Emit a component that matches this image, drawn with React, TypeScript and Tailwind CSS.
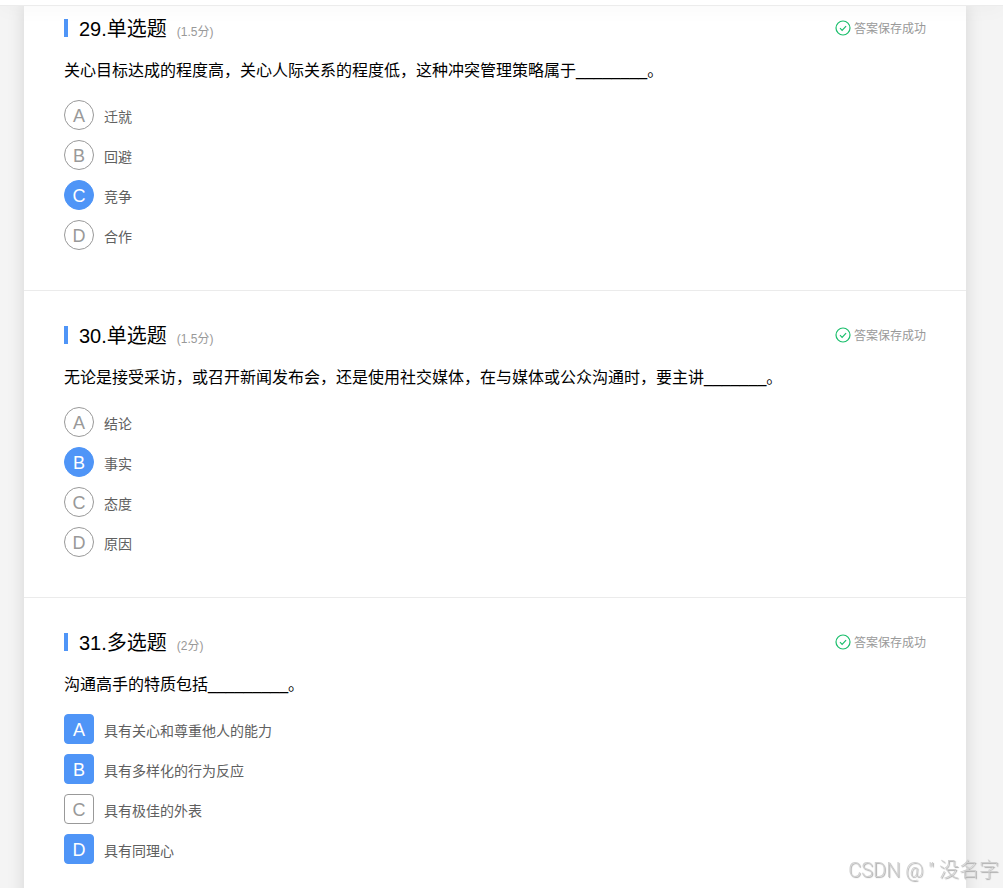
import { useState } from 'react';

type Question = {
  id: number;
  kind: 'single' | 'multiple';
  score: string;
  text: string;
  options: string[];
  answer: number[];
};

const questions: Question[] = [
  {
    id: 29,
    kind: 'single',
    score: '1.5',
    text: '关心目标达成的程度高，关心人际关系的程度低，这种冲突管理策略属于________。',
    options: ['迁就', '回避', '竞争', '合作'],
    answer: [2],
  },
  {
    id: 30,
    kind: 'single',
    score: '1.5',
    text: '无论是接受采访，或召开新闻发布会，还是使用社交媒体，在与媒体或公众沟通时，要主讲_______。',
    options: ['结论', '事实', '态度', '原因'],
    answer: [1],
  },
  {
    id: 31,
    kind: 'multiple',
    score: '2',
    text: '沟通高手的特质包括_________。',
    options: ['具有关心和尊重他人的能力', '具有多样化的行为反应', '具有极佳的外表', '具有同理心'],
    answer: [0, 1, 3],
  },
];

function SavedStatus() {
  return (
    <p className="flex items-center gap-[3px] text-[12px] leading-[18px] text-[#999999]">
      <svg className="mb-[2px] size-4" viewBox="0 0 16 16" fill="none" stroke="#19be6b" aria-hidden="true">
        <circle cx="8" cy="8" r="7" strokeWidth="1.2" />
        <path d="M5 8.2l2.1 2.1 4-4.2" strokeWidth="1.2" />
      </svg>
      答案保存成功
    </p>
  );
}

function QuestionBlock({ question }: { question: Question }) {
  const [selected, setSelected] = useState(question.answer);
  const single = question.kind === 'single';

  const choose = (index: number) => {
    if (single) {
      setSelected([index]);
    } else {
      setSelected((now) => (now.includes(index) ? now.filter((i) => i !== index) : [...now, index]));
    }
  };

  return (
    <section className="border-b border-[#ebebeb] px-10 pt-[30px] pb-10 first:pt-2">
      <div className="flex h-[30px] items-center justify-between">
        <div className="flex items-center">
          <span className="mb-[2px] h-[18px] w-1 bg-[#4f95f7]" />
          <h2 className="ml-[11px] flex items-baseline gap-[10px] pt-[2px] text-[20px] leading-[30px] text-black">
            <span>
              {question.id}.{single ? '单选题' : '多选题'}
            </span>
            <span className="text-[12px] text-[#999999]">({question.score}分)</span>
          </h2>
        </div>
        <SavedStatus />
      </div>
      <p className="mt-[15px] mb-[17px] text-[16px] leading-6 text-black">{question.text}</p>
      <div className="flex flex-col items-start gap-[10px]" role="group" aria-label={question.text}>
        {question.options.map((option, index) => {
          const active = selected.includes(index);
          return (
            <label key={option} className="relative flex cursor-pointer items-center gap-[10px]">
              <input
                type={single ? 'radio' : 'checkbox'}
                name={`question-${question.id}`}
                checked={active}
                onChange={() => choose(index)}
                className="sr-only"
              />
              <span
                className={`flex size-[30px] items-center justify-center border text-[18px] leading-7 ${
                  single ? 'rounded-full' : 'rounded-[4px]'
                } ${active ? 'border-[#4f95f7] bg-[#4f95f7] text-white' : 'border-[#999999] bg-white text-[#999999]'}`}
              >
                <span className="pt-[2px]">{'ABCD'[index]}</span>
              </span>
              <span className="pt-1 text-[14px] leading-5 text-[#606060]">{option}</span>
            </label>
          );
        })}
      </div>
    </section>
  );
}

export default function App() {
  return (
    <div className="flex h-screen flex-col overflow-hidden bg-[#f4f4f4] font-['Liberation_Sans','Noto_Sans_CJK_SC',sans-serif]">
      <header className="relative z-10 h-[6px] shrink-0 border-b border-[#ececec] bg-white shadow-[0_0_20px_rgba(0,0,0,0.07)]" />
      <main className="mr-[37px] ml-6 grow bg-white shadow-[0_0_16px_rgba(0,0,0,0.13)]">
        {questions.map((question) => (
          <QuestionBlock key={question.id} question={question} />
        ))}
      </main>
      <div className="pointer-events-none fixed right-1 bottom-1 font-['Roboto','Noto_Sans_CJK_SC',sans-serif] text-[20px] leading-7 font-light text-[#d0d0d0] [text-shadow:1px_1px_1px_#aaaaaa]">
        CSDN @ " 没名字
      </div>
    </div>
  );
}
